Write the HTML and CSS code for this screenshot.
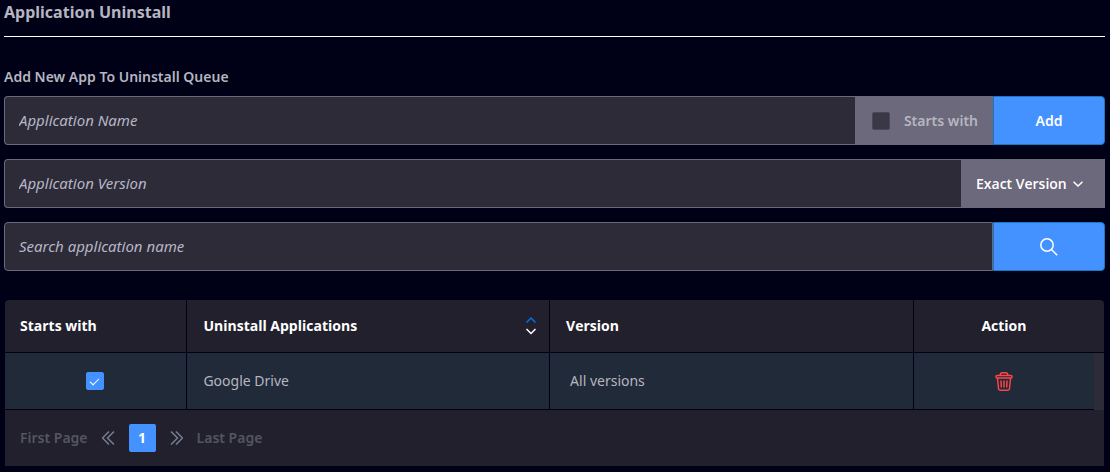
FILE: index.html
```html
<!DOCTYPE html>
<html lang="en">
<head>
    <title>Application Uninstall</title>
    <meta charset="UTF-8">
    <meta name="viewport" content="width=device-width, initial-scale=1.0">
    <link rel="stylesheet" href="styles.css">
</head>
<body>
    <div class="page">
        <h1 class="page-title">Application Uninstall</h1>

        <form class="uninstall-form">
            <label class="form-label" for="app-name">Add New App To Uninstall Queue</label>

            <div class="input-group">
                <input class="text-input" type="text" id="app-name" placeholder="Application Name">
                <label class="starts-with">
                    <input class="checkbox" type="checkbox">
                    Starts with
                </label>
                <button class="btn" type="submit">Add</button>
            </div>

            <div class="input-group">
                <input class="text-input" type="text" placeholder="Application Version" aria-label="Application Version">
                <div class="version-type">
                    <select class="version-select" aria-label="Version match">
                        <option>Exact Version</option>
                    </select>
                    <svg class="version-arrow" width="10" height="6" viewBox="0 0 10 6"><path d="M.5 .8l4.500 4.200 4.500-4.200"/></svg>
                </div>
            </div>

            <div class="input-group">
                <input class="text-input search-input" type="search" placeholder="Search application name" aria-label="Search application name">
                <button class="btn" type="button" aria-label="Search">
                    <svg class="icon-search" width="18" height="18" viewBox="0 0 18 18"><circle cx="7" cy="7" r="6.2"/><path d="M11.5 11.5l5.7 5.7"/></svg>
                </button>
            </div>
        </form>

        <div class="table-card">
            <table class="app-table">
                <colgroup>
                    <col class="col-starts">
                    <col class="col-app">
                    <col class="col-version">
                    <col class="col-action">
                    <col class="col-scroll">
                </colgroup>
                <thead>
                    <tr>
                        <th>Starts with</th>
                        <th>
                            <div class="sortable">
                                Uninstall Applications
                                <svg class="icon-sort" width="12" height="20" viewBox="0 0 12 20"><path class="sort-up" d="M1.5 6.5L6 2l4.500 4.500"/><path class="sort-down" d="M1.500 13L6 17.500l4.500-4.500"/></svg>
                            </div>
                        </th>
                        <th>Version</th>
                        <th class="center">Action</th>
                        <td></td>
                    </tr>
                </thead>
                <tbody>
                    <tr>
                        <td class="center"><input class="checkbox" type="checkbox" aria-label="Starts with" checked></td>
                        <td>Google Drive</td>
                        <td class="version">All versions</td>
                        <td class="center">
                            <button class="btn-delete" type="button" aria-label="Delete">
                                <svg width="18" height="20" viewBox="0 0 18 20">
                                    <path d="M5 4.500Q5.500 1.700 7 1.700h4q1.500 0 2 2.800"/>
                                    <rect x="1" y="4.500" width="16" height="2.500" rx="1"/>
                                    <path d="M2.500 7l1 10.500q.2 1.700 1.500 1.700h8q1.300 0 1.500-1.700L15.500 7"/>
                                    <path d="M6 9.500l.3 7M9 9.500v7M12 9.500l-.3 7"/>
                                </svg>
                            </button>
                        </td>
                        <td class="scroll-gutter"></td>
                    </tr>
                </tbody>
            </table>

            <nav class="pagination" aria-label="Pages">
                <button class="page-link" type="button">First Page</button>
                <button class="page-arrow" type="button" aria-label="Previous">
                    <svg width="13" height="14" viewBox="0 0 13 14"><path d="M7 .5L.5 7 7 13.500M12 .5L5.500 7l6.500 6.500"/></svg>
                </button>
                <button class="page-current" type="button">1</button>
                <button class="page-arrow" type="button" aria-label="Next">
                    <svg width="13" height="14" viewBox="0 0 13 14"><path d="M6 .5L12.500 7 6 13.500M1 .5L7.500 7 1 13.500"/></svg>
                </button>
                <button class="page-link" type="button">Last Page</button>
            </nav>
        </div>
    </div>
</body>
</html>
```

FILE: styles.css
```css
* { box-sizing: border-box; }
body {
    margin: 0;
    background: #000016;
    color: #b6b6c0;
    font: 14px/20px "Noto Sans", "Open Sans", sans-serif;
}
button, input, select { font: inherit; }
button { cursor: pointer; }
svg { display: block; fill: none; stroke: currentColor; }

.page { padding: 0 5px 6px 4px; }
.page-title {
    margin: 0 0 30px;
    padding: 2px 0 14px;
    border-bottom: 1px solid #fff;
    font-size: 16px;
    line-height: 20px;
    font-weight: 700;
}

/* form */
.uninstall-form { display: flex; flex-direction: column; gap: 14px; }
.form-label { margin-bottom: -5px; font-weight: 600; }
.input-group { display: flex; height: 49px; }
.text-input {
    flex: 1;
    min-width: 0;
    padding: 0 14px;
    border: 1px solid #6b697b;
    border-right: 0;
    border-radius: 4px 0 0 4px;
    background: #2d2b38;
    color: #fff;
    appearance: none;
}
.search-input { border-right: 1px solid #6b697b; }
.text-input::placeholder { color: #b6b6c6; font-size: 15px; font-style: italic; opacity: 1; }
.starts-with {
    display: flex;
    align-items: center;
    gap: 14px;
    padding: 0 15px 0 17px;
    background: #6b697b;
    font-weight: 600;
}
.checkbox {
    display: block;
    width: 18px;
    height: 18px;
    margin: 0;
    border: 1px solid #4a4857;
    border-radius: 2px;
    background: #3a3847;
    appearance: none;
}
.checkbox:checked {
    border-color: #4492ff;
    background: #4492ff;
}
.checkbox:checked::after {
    content: "";
    display: block;
    width: 8px;
    height: 4px;
    margin: 5px auto 0;
    border: solid #fff;
    border-width: 0 0 1px 1px;
    outline: 0;
    transform: rotate(-45deg);
}
.btn {
    display: flex;
    align-items: center;
    justify-content: center;
    width: 112px;
    padding: 0;
    border: 1px solid #1a78c2;
    border-radius: 0 4px 4px 0;
    background: #4492ff;
    color: #fff;
    font-weight: 600;
}
.icon-search { stroke-width: 1.500; }
.version-type { position: relative; display: flex; }
.version-select {
    width: 144px;
    padding: 0 15px;
    border: 0;
    border-radius: 0;
    background: #6b697b;
    color: #fff;
    font-family: "Open Sans", "Noto Sans", sans-serif;
    font-weight: 600;
    appearance: none;
}
.version-arrow {
    position: absolute;
    top: 22px;
    right: 22px;
    color: #fff;
    stroke-width: 1.500;
    pointer-events: none;
}

/* table */
.table-card {
    margin: 29px 1px 0;
    border-radius: 4px 4px 0 0;
    background: #22202d;
    overflow: hidden;
}
.app-table {
    width: 100%;
    table-layout: fixed;
    border-spacing: 0;
}
.col-starts { width: 16.6%; }
.col-app { width: 33%; }
.col-version { width: 33.1%; }
.col-scroll { width: 10px; }
.app-table th, .app-table td {
    padding: 0 16px;
    border: solid #000016;
    border-width: 0 1px 1px 0;
    text-align: left;
}
.app-table th {
    height: 53px;
    padding-right: 10px;
    color: #fff;
    font-family: "Open Sans", "Noto Sans", sans-serif;
    font-weight: 700;
}
.app-table th:first-child { padding-left: 15px; }
.app-table tbody td { height: 57px; background: #212a38; }
.app-table td.version { padding-left: 20px; }
.app-table tr > :nth-last-child(-n+2) { border-right: 0; }
.app-table tr > :last-child { padding: 0; }
.app-table .center { padding: 0; text-align: center; }
.app-table tbody .center:first-child { padding-right: 2px; }
.center .checkbox { margin: 0 auto; }
.app-table tbody .scroll-gutter { border-bottom: 0; background: #2d2b38; }
.sortable { display: flex; align-items: center; justify-content: space-between; }
.icon-sort { margin-right: 2px; stroke-width: 1.500; }
.sort-up { stroke: #006ef0; }
.sort-down { stroke: #fff; }
.btn-delete {
    display: block;
    margin: 0 auto;
    padding: 0;
    border: 0;
    background: none;
    color: #ff4347;
    stroke-width: 1.500;
}

/* pagination */
.pagination {
    display: flex;
    align-items: center;
    gap: 14px;
    padding: 14px 15px;
}
.page-link, .page-arrow {
    padding: 0;
    border: 0;
    background: none;
    color: #535562;
    font-weight: 600;
}
.page-arrow { color: #737f91; stroke-width: 1.500; }
.page-current {
    width: 27px;
    height: 28px;
    padding: 0;
    border: 0;
    border-radius: 2px;
    background: #4492ff;
    color: #fff;
    font-weight: 700;
}
```
